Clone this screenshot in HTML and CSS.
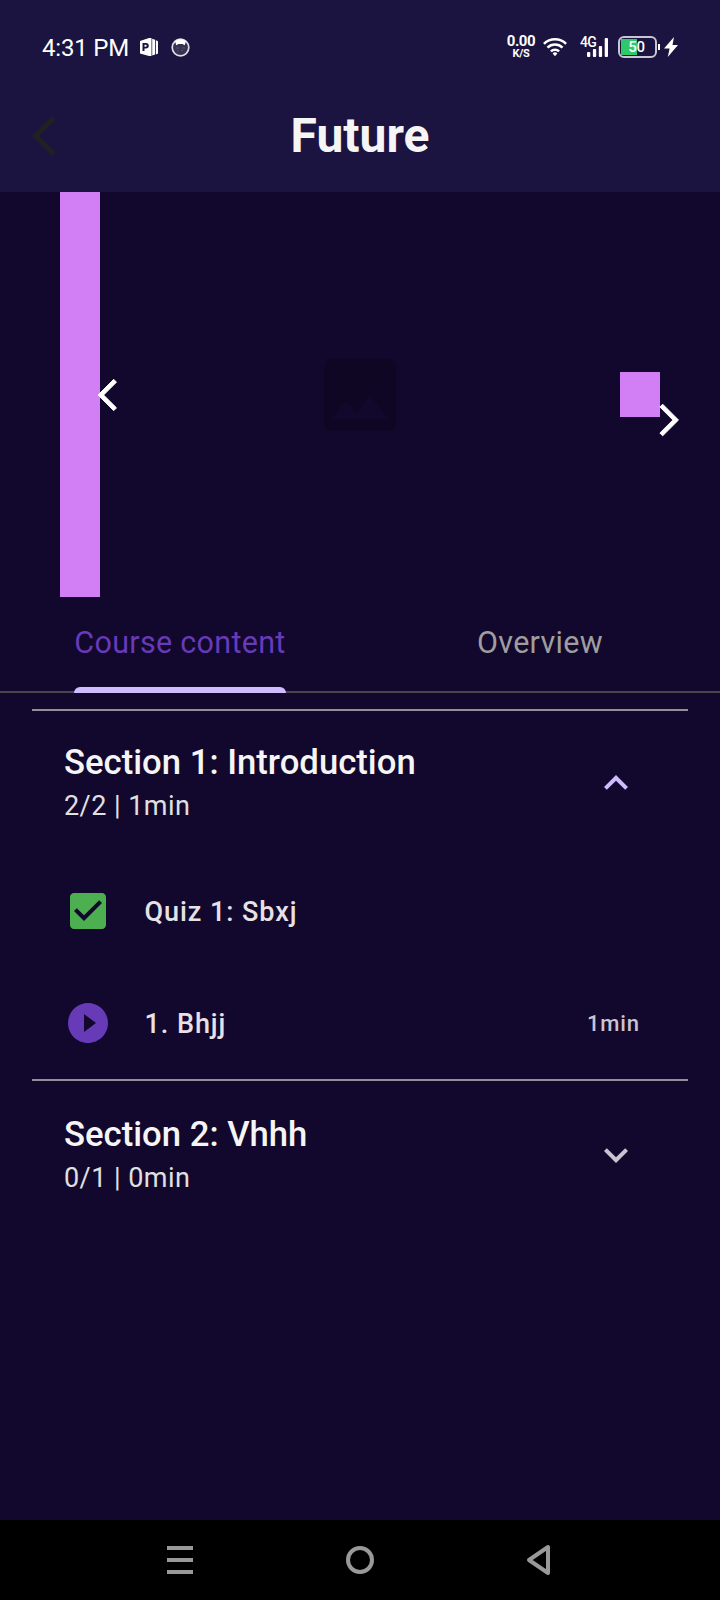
FILE: index.html
```html
<!DOCTYPE html>
<html lang="en">
<head>
<meta charset="utf-8">
<title>Future</title>
<link rel="stylesheet" href="styles.css">
</head>
<body>
<div class="screen">
  <header class="top">
    <div class="status">
      <div class="status-left">
        <span class="clock">4:31 PM</span>
        <svg class="office" width="18" height="18" viewBox="0 0 18 18"><path fill="#fff" fill-rule="evenodd" d="M0 3 9 0h2.500v18H9L0 15.500zM2.500 5v8H4.500v-2.500H6a2.700 2.700 0 0 0 0-5.500zM4.500 6.800H5.700a1 1 0 0 1 0 2H4.500z"/><path fill="#fff" d="M12.200.8l2.900 1v14.700l-2.900.9zM15.900 2.300l2.100.9v12.300l-2.100.9z"/></svg>
        <svg class="face" width="19" height="19" viewBox="0 0 19 19"><circle cx="9.500" cy="9.500" r="8.300" fill="#373052" stroke="#dddbe3" stroke-width="1.700"/><path fill="#fff" d="M4 3.300C7 .5 12 .5 15 3.300L13.700 7.200 11.500 6h-4L5.300 7.200z"/><path stroke="#575070" stroke-width="1" d="M5 10h3m3 0h3M6 13h2m2-.5h2"/></svg>
      </div>
      <div class="status-right">
        <div class="speed"><span class="rate">0.00</span><span class="unit">K/S</span></div>
        <svg class="wifi" width="24" height="20" viewBox="0 0 24 20"><g fill="none" stroke="#fff" stroke-width="2.500"><path d="M.9 6.800a15.800 15.800 0 0 1 22.200 0"/><path d="M4.500 10.600a10.700 10.700 0 0 1 15 0"/><path d="M7.900 14.300a5.900 5.900 0 0 1 8.200 0"/></g><path fill="#fff" d="M9.600 16.500a3.500 3.500 0 0 1 4.800 0L12 19.300z"/></svg>
        <div class="cell"><span class="net">4G</span><svg class="bars" width="21" height="19" viewBox="0 0 21 19"><g fill="#fff"><rect x="0" y="14" width="3.300" height="5" rx="1"/><rect x="5.900" y="11" width="3.300" height="8" rx="1"/><rect x="11.800" y="8" width="3.300" height="11" rx="1"/><rect x="17.700" y="0" width="3.300" height="19" rx="1"/></g></svg></div>
        <div class="battery"><span class="level">50</span></div>
        <span class="nub"></span>
        <svg class="bolt" width="14" height="20" viewBox="0 0 14 20"><path fill="#fff" d="M10 0 0 11.500h5.600L3.800 20 14 8H8.500z"/></svg>
      </div>
    </div>
    <div class="appbar">
      <svg class="back" width="48" height="48" viewBox="0 0 24 24"><path fill="#212121" d="M11.670 3.870 9.900 2.100 0 12l9.900 9.900 1.770-1.770L3.540 12z"/></svg>
      <h1 class="title">Future</h1>
    </div>
  </header>

  <section class="carousel">
    <span class="strip"></span>
    <svg class="prev" width="38" height="38" viewBox="0 0 24 24"><path fill="#fff" stroke="#fff" stroke-width=".6" d="M11.670 3.870 9.900 2.100 0 12l9.900 9.900 1.770-1.770L3.540 12z"/></svg>
    <svg class="placeholder" width="96" height="96" viewBox="0 0 24 24"><path fill="#0f0623" d="M21 19V5c0-1.100-.9-2-2-2H5c-1.100 0-2 .9-2 2v14c0 1.100.9 2 2 2h14c1.100 0 2-.9 2-2zM8.500 13.500l2.500 3.010L14.500 12l4.500 6H5l3.500-4.500z"/></svg>
    <span class="block"></span>
    <svg class="next" width="38" height="38" viewBox="0 0 24 24"><path fill="#fff" stroke="#fff" stroke-width=".6" d="M6.230 20.230 8 22l10-10L8 2 6.230 3.770 14.460 12z"/></svg>
  </section>

  <nav class="tabs">
    <div class="tab active"><span class="tab-label">Course content</span></div>
    <div class="tab"><span class="tab-label">Overview</span></div>
  </nav>

  <main class="sections">
    <section class="section">
      <div class="section-head">
        <div class="section-text"><h2 class="name">Section 1: Introduction</h2><p class="meta">2/2 | 1min</p></div>
        <svg width="48" height="48" viewBox="0 0 24 24"><path fill="#cfbcff" d="m12 8-6 6 1.410 1.410L12 10.830l4.590 4.580L18 14z"/></svg>
      </div>
      <div class="item">
        <svg width="48" height="48" viewBox="0 0 24 24"><path fill="#4caf50" d="M19 3H5c-1.110 0-2 .9-2 2v14c0 1.100.89 2 2 2h14c1.110 0 2-.9 2-2V5c0-1.100-.89-2-2-2zm-9 14l-5-5 1.410-1.410L10 14.170l7.590-7.590L19 8l-9 9z"/></svg>
        <span class="item-name">Quiz 1: Sbxj</span>
      </div>
      <div class="item">
        <svg width="48" height="48" viewBox="0 0 24 24"><path fill="#673ab7" d="M12 2C6.480 2 2 6.480 2 12s4.480 10 10 10 10-4.480 10-10S17.520 2 12 2zm-2 14.500v-9l6 4.500-6 4.500z"/></svg>
        <span class="item-name">1. Bhjj</span>
        <span class="length">1min</span>
      </div>
    </section>
    <section class="section second">
      <div class="section-head">
        <div class="section-text"><h2 class="name">Section 2: Vhhh</h2><p class="meta">0/1 | 0min</p></div>
        <svg width="48" height="48" viewBox="0 0 24 24"><path fill="#cac4d0" d="M16.590 8.590 12 13.170 7.410 8.590 6 10l6 6 6-6z"/></svg>
      </div>
    </section>
  </main>

  <footer class="navbar">
    <svg width="30" height="32" viewBox="0 0 30 32"><path fill="#999" d="M2 2h26v4H2zM2 14h26v4H2zM2 26h26v4H2z"/></svg>
    <svg width="30" height="32" viewBox="0 0 30 32"><circle cx="15" cy="16" r="12" fill="none" stroke="#999" stroke-width="4"/></svg>
    <svg width="30" height="32" viewBox="0 0 30 32"><path fill="none" stroke="#999" stroke-width="4" stroke-linejoin="round" d="M23 3v26L4 16z"/></svg>
  </footer>
</div>
</body>
</html>
```
FILE: styles.css
```css
* { box-sizing: border-box; }
body {
  margin: 0;
  background: #12072d;
  font-family: Roboto, "Liberation Sans", sans-serif;
}
svg { display: block; flex: none; }
h1, h2, p { margin: 0; white-space: nowrap; }
.screen {
  width: 720px;
  height: 1600px;
  display: flex;
  flex-direction: column;
  overflow: hidden;
}
.top { height: 192px; background: #1b1340; }
.status {
  height: 80px;
  padding: 14px 42px 0 42px;
  display: flex;
  justify-content: space-between;
  color: #fff;
}
.status-left, .status-right { display: flex; height: 66px; align-items: center; }
.status-left { gap: 9px; }
.clock { font-size: 24px; line-height: 28px; width: 89px; letter-spacing: -0.2px; white-space: nowrap; padding-top: 1px; }
.face { margin-left: 4px; }
.speed {
  display: flex;
  flex-direction: column;
  align-items: center;
  font-weight: 700;
  width: 30px;
  margin-right: 7px;
}
.rate { font-size: 15px; line-height: 13px; letter-spacing: -0.4px; }
.unit { font-size: 11px; line-height: 11px; letter-spacing: -0.2px; }
.cell { position: relative; width: 28px; height: 20px; margin: 0 10px 0 13px; display: flex; justify-content: flex-end; align-items: flex-end; }
.net { position: absolute; left: 0; top: -2px; font-size: 14px; line-height: 14px; font-weight: 500; letter-spacing: -0.6px; }
.battery {
  width: 39px;
  height: 22px;
  border: 2px solid #c9c6d4;
  border-radius: 6px;
  background: linear-gradient(90deg, #2dc96b 16px, transparent 16px) 1px 1px / 33px 16px no-repeat;
  display: flex;
  justify-content: center;
  align-items: center;
}
.level { font-size: 15px; font-weight: 500; line-height: 16px; letter-spacing: -0.4px; margin-right: 2px; }
.nub { width: 2px; height: 6px; margin: 0 4px 0 1px; background: #fff; }
.appbar {
  height: 112px;
  display: grid;
  grid-template-columns: 48px 1fr 48px;
  align-items: center;
  padding: 0 32px;
}
.title { text-align: center; font-size: 48px; line-height: 56px; font-weight: 700; color: #f5f5f5; }
.carousel {
  height: 405px;
  display: flex;
  align-items: center;
  padding-left: 60px;
}
.strip { width: 40px; height: 405px; background: #d27ef5; }
.prev { margin: 1px 0 0 -2px; overflow: visible; }
.placeholder { margin: 1px 0 0 176px; }
.block { width: 40px; height: 45px; background: #d27ef5; margin-left: 212px; }
.next { margin: 50px 0 0 -10.500px; overflow: visible; }
.tabs {
  height: 96px;
  display: grid;
  grid-template-columns: 1fr 1fr;
  justify-items: center;
  border-bottom: 2px solid #49454a;
}
.tab { height: 96px; padding-top: 28px; color: #9e9e9e; font-size: 30.500px; line-height: 36px; }
.tab-label { letter-spacing: 0.3px; white-space: nowrap; }
.active { color: #673ab7; display: flex; flex-direction: column; justify-content: space-between; }
.active::after { content: ""; height: 6px; background: #cfbcff; border-radius: 6px 6px 0 0; }
.sections { flex: 1; padding: 16px 32px 0; }
.section { border-top: 2px solid #938f99; }
.second .section-head { margin-top: 2px; }
.section-head {
  height: 144px;
  padding: 0 48px 0 32px;
  display: flex;
  align-items: center;
  justify-content: space-between;
}
.section-text { padding-top: 4px; }
.name { font-size: 34.700px; line-height: 42px; font-weight: 500; color: #f5f5f5; }
.meta { font-size: 27px; line-height: 46px; letter-spacing: 0.45px; color: #e0e0e0; }
.item {
  height: 112px;
  padding: 0 48px 0 32px;
  display: flex;
  align-items: center;
}
.item-name { margin-left: 32.500px; padding-top: 2px; font-size: 27px; line-height: 40px; font-weight: 500; letter-spacing: 0.95px; color: #e6e1e5; white-space: nowrap; }
.length { margin-left: auto; font-size: 22px; font-weight: 500; letter-spacing: 0.9px; color: #cac4d0; }
.navbar {
  height: 80px;
  background: #000;
  display: flex;
  align-items: center;
  justify-content: space-between;
  padding: 0 165px;
}
```
